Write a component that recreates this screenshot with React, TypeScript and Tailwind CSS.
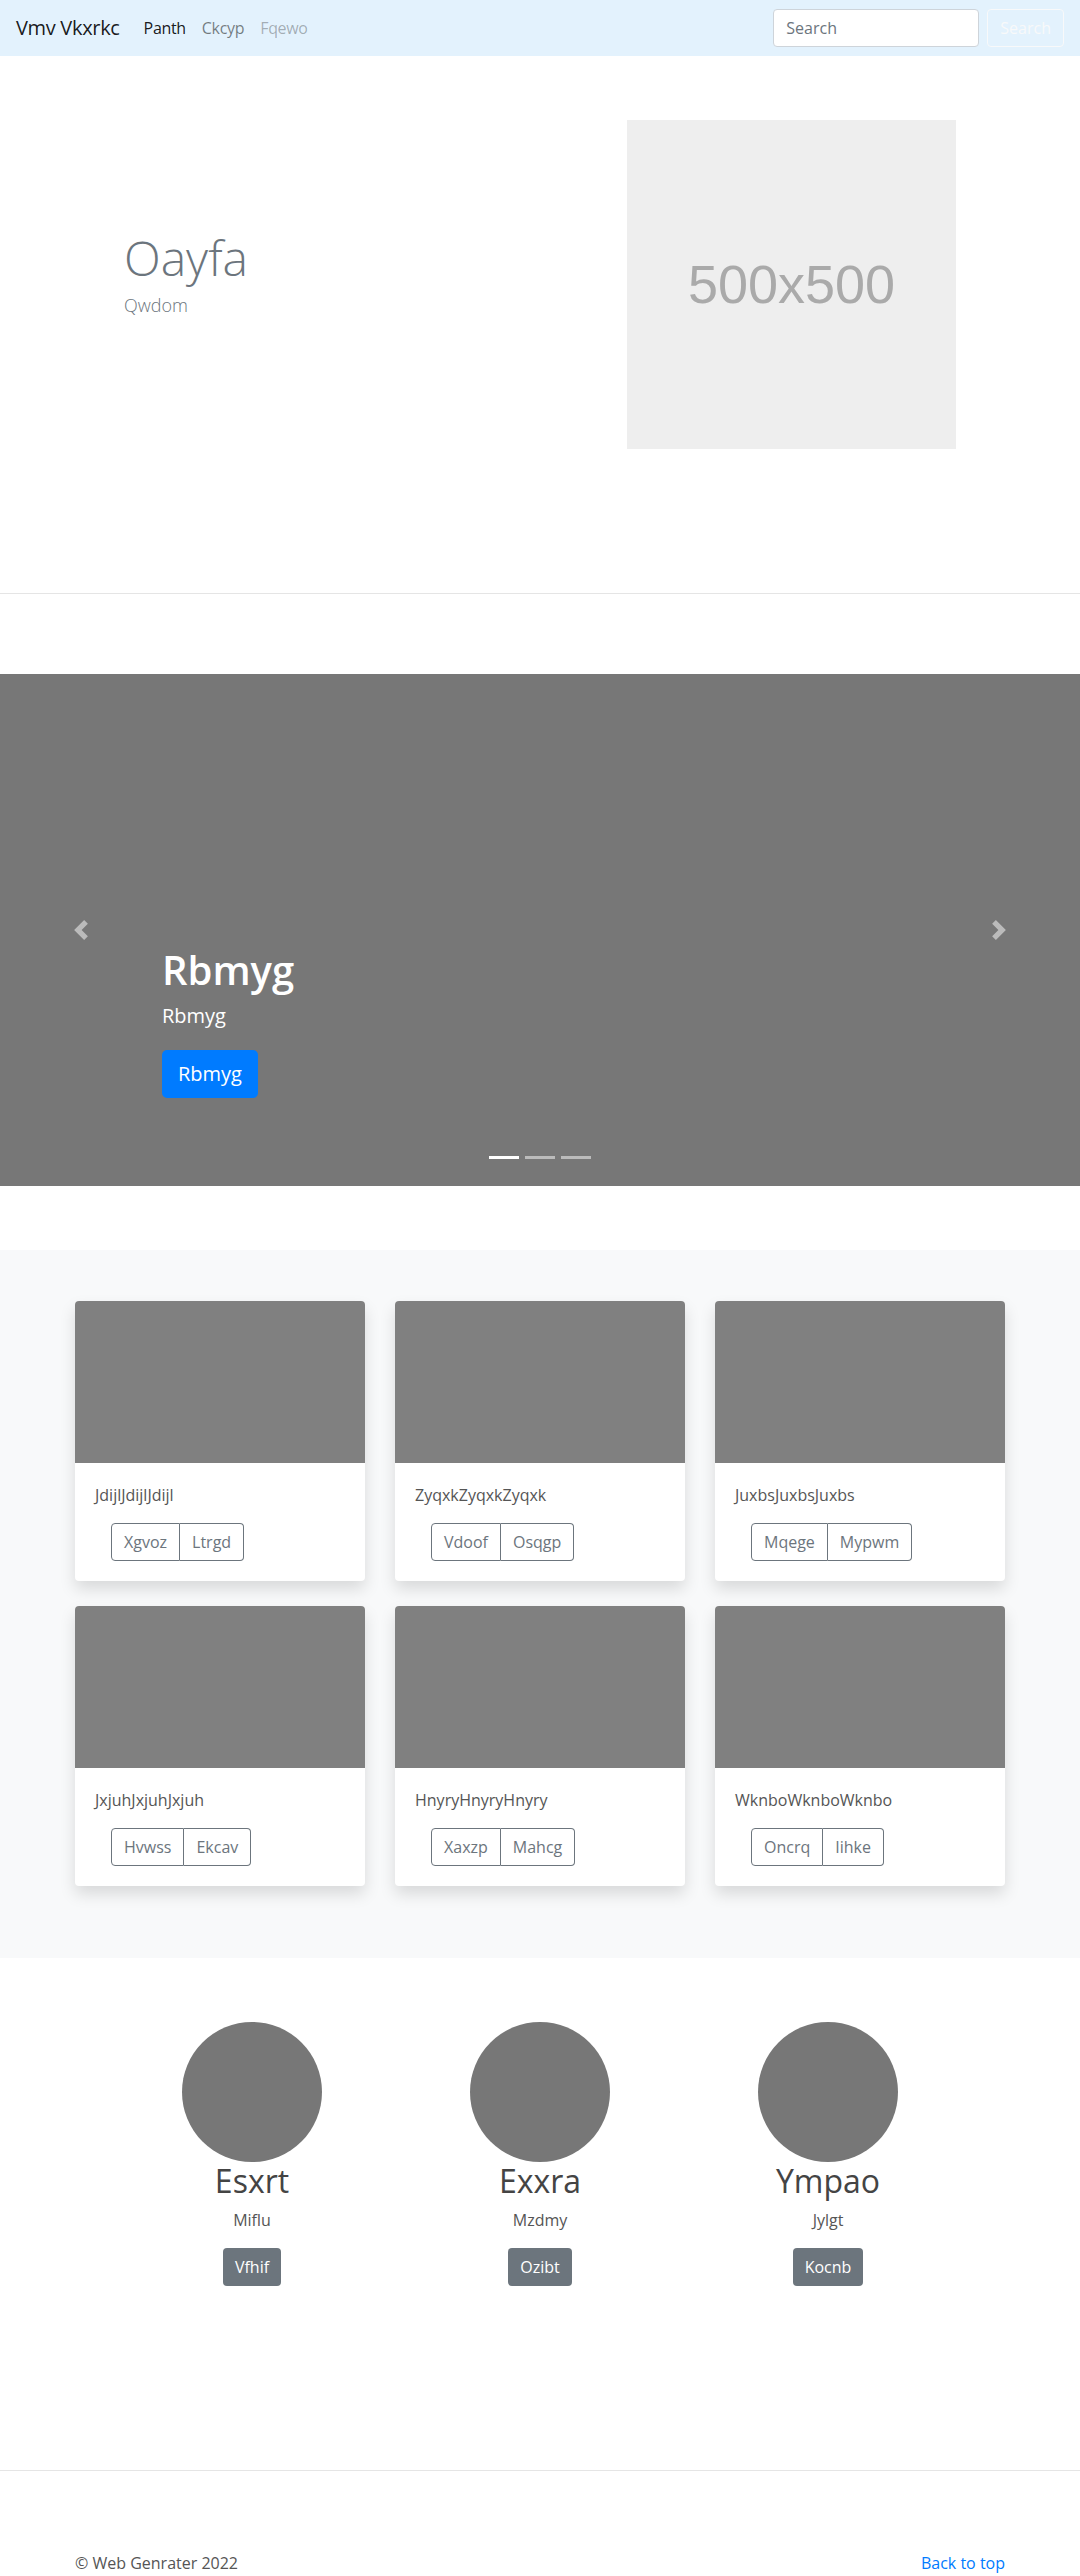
import React from "react";

type Album = {
  text: string;
  a: string;
  b: string;
};

const ALBUM: Album[] = [
  { text: "JdijlJdijlJdijl", a: "Xgvoz", b: "Ltrgd" },
  { text: "ZyqxkZyqxkZyqxk", a: "Vdoof", b: "Osqgp" },
  { text: "JuxbsJuxbsJuxbs", a: "Mqege", b: "Mypwm" },
  { text: "JxjuhJxjuhJxjuh", a: "Hvwss", b: "Ekcav" },
  { text: "HnyryHnyryHnyry", a: "Xaxzp", b: "Mahcg" },
  { text: "WknboWknboWknbo", a: "Oncrq", b: "Iihke" },
];

const TEAM = [
  { name: "Esxrt", role: "Miflu", btn: "Vfhif" },
  { name: "Exxra", role: "Mzdmy", btn: "Ozibt" },
  { name: "Ympao", role: "Jylgt", btn: "Kocnb" },
];

function Chevron({ dir }: { dir: "prev" | "next" }) {
  return (
    <svg width="20" height="20" viewBox="0 0 8 8" fill="#fff">
      {dir === "prev" ? (
        <path d="M5.25 0l-4 4 4 4 1.5-1.5L4.25 4l2.5-2.5L5.25 0z" />
      ) : (
        <path d="M2.75 0l-1.5 1.5L3.75 4l-2.5 2.5L2.75 8l4-4-4-4z" />
      )}
    </svg>
  );
}

function Navbar() {
  return (
    <nav className="h-14 bg-[#e3f2fd] flex items-center justify-between px-4">
      <div className="flex items-center tracking-[-0.02em]">
        <span className="text-xl text-black/90 mr-4">Vmv Vkxrkc</span>
        <a className="px-2 text-base text-black/90">Panth</a>
        <a className="px-2 text-base text-black/50">Ckcyp</a>
        <a className="px-2 text-base text-black/30">Fqewo</a>
      </div>
      <div className="flex items-center">
        <input
          placeholder="Search"
          className="w-[206px] h-[38px] bg-white border border-[#ced4da] rounded px-3 text-base text-[#495057] placeholder:text-[#6c757d] mr-2"
        />
        <button className="h-[38px] px-3 border border-[#f8f9fa] rounded text-base text-[#f8f9fa]">
          Search
        </button>
      </div>
    </nav>
  );
}

function Hero() {
  return (
    <section className="h-[538px] border-b border-[#e5e5e5] pt-16 flex">
      <div className="w-[627px] pl-[124px] pt-[109px]">
        <h1 className="text-5xl font-light leading-[1.2] text-[#6c757d] mb-[5px]">Oayfa</h1>
        <p className="text-lg font-light leading-normal text-[#6c757d]">Qwdom</p>
      </div>
      <div className="w-[329px] h-[329px] bg-[#eeeeee] flex items-center justify-center">
        <span className="text-[54px] text-[#aaaaaa] font-['Liberation_Sans',Arial,sans-serif]">500x500</span>
      </div>
    </section>
  );
}

function Carousel() {
  return (
    <section className="relative mt-20 h-[512px] bg-[#777777] text-white">
      <div className="absolute inset-y-0 left-0 w-[15%] flex items-center justify-center opacity-50">
        <Chevron dir="prev" />
      </div>
      <div className="absolute inset-y-0 right-0 w-[15%] flex items-center justify-center opacity-50">
        <Chevron dir="next" />
      </div>
      <div className="absolute left-[15%] bottom-[88px] flex flex-col items-start">
        <h1 className="text-[40px] font-semibold leading-[1.2] mb-2">Rbmyg</h1>
        <p className="text-xl leading-[1.4] mb-5">Rbmyg</p>
        <button className="h-12 px-4 bg-[#007bff] rounded-[5px] text-xl">Rbmyg</button>
      </div>
      <div className="absolute bottom-[27px] left-0 right-0 flex justify-center gap-[6px]">
        <span className="w-[30px] h-[3px] bg-white" />
        <span className="w-[30px] h-[3px] bg-white/50" />
        <span className="w-[30px] h-[3px] bg-white/50" />
      </div>
    </section>
  );
}

function AlbumCard({ card }: { card: Album }) {
  return (
    <div className="bg-white rounded shadow-[0_8px_16px_rgba(0,0,0,0.13)] overflow-hidden">
      <div className="h-[162px] bg-[#808080]" />
      <div className="p-5">
        <p className="text-base leading-6 text-[#555555] mb-4">{card.text}</p>
        <div className="ml-4 flex">
          <button className="h-[38px] px-3 border border-[#6c757d] rounded-l text-base text-[#6c757d]">
            {card.a}
          </button>
          <button className="h-[38px] px-3 border border-l-0 border-[#6c757d] rounded-r text-base text-[#6c757d]">
            {card.b}
          </button>
        </div>
      </div>
    </div>
  );
}

function AlbumSection() {
  return (
    <section className="mt-16 bg-[#f8f9fa] pt-[51px] pb-[72px]">
      <div className="w-[930px] mx-auto grid grid-cols-3 gap-x-[30px] gap-y-[25px]">
        {ALBUM.map((c) => (
          <AlbumCard key={c.text} card={c} />
        ))}
      </div>
    </section>
  );
}

function Team() {
  return (
    <section className="pt-16 pb-[184px]">
      <div className="w-[864px] mx-auto grid grid-cols-3">
        {TEAM.map((p) => (
          <div key={p.name} className="flex flex-col items-center">
            <div className="w-[140px] h-[140px] rounded-full bg-[#777777]" />
            <h2 className="text-[32px] leading-[1.2] text-[#444444] mb-2">{p.name}</h2>
            <p className="text-base leading-6 text-[#555555] mb-4">{p.role}</p>
            <button className="h-[38px] px-3 bg-[#6c757d] rounded text-base text-white">{p.btn}</button>
          </div>
        ))}
      </div>
    </section>
  );
}

function Footer() {
  return (
    <footer className="border-t border-[#e5e5e5] pt-20">
      <div className="w-[930px] mx-auto flex justify-between text-base leading-6">
        <p className="text-[#555555]">© Web Genrater 2022</p>
        <a className="text-[#007bff]">Back to top</a>
      </div>
    </footer>
  );
}

export default function App() {
  return (
    <div className="w-[1080px] bg-white font-['Open_Sans','Noto_Sans',sans-serif] text-[#212529]">
      <Navbar />
      <Hero />
      <Carousel />
      <AlbumSection />
      <Team />
      <Footer />
    </div>
  );
}
